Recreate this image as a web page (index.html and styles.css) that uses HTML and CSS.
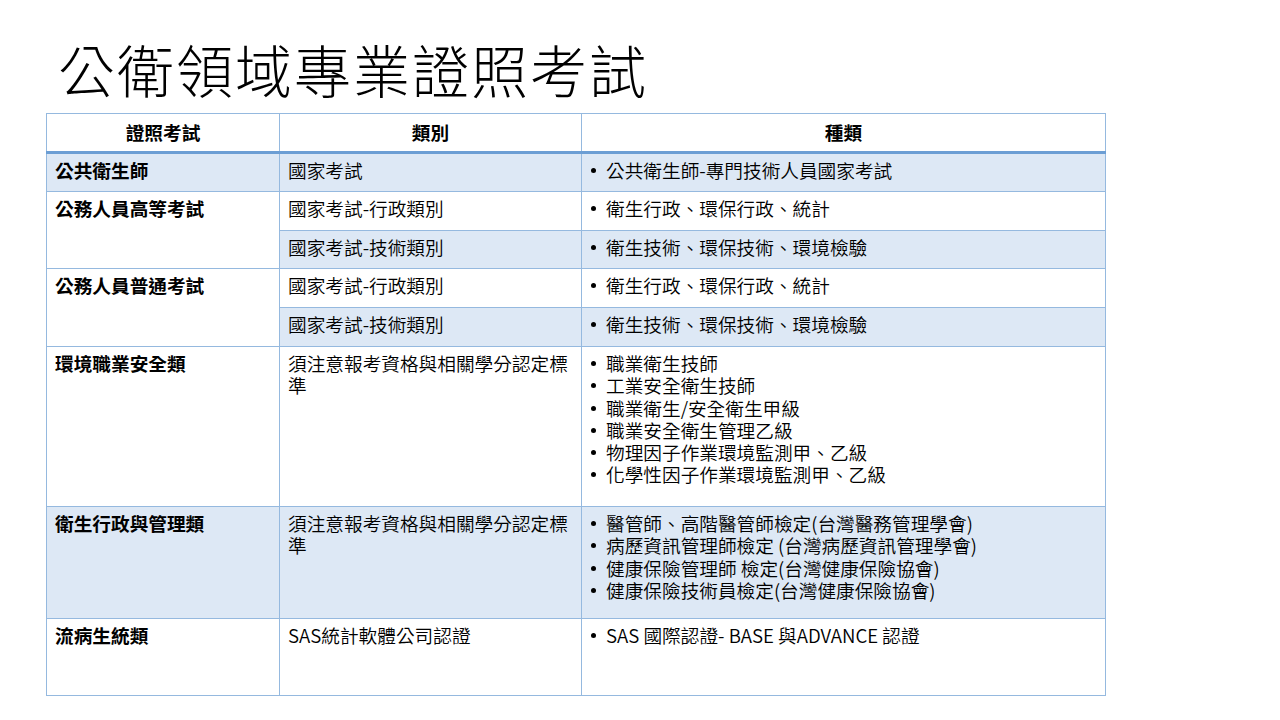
FILE: index.html
```html
<!DOCTYPE html>
<html lang="zh-Hant">
<head>
<meta charset="utf-8">
<title>公衛領域專業證照考試</title>
<link rel="stylesheet" href="styles.css">
</head>
<body>
<div class="slide">
  <h1 class="title">公衛領域專業證照考試</h1>
  <table class="exam-table">
    <colgroup>
      <col class="c1">
      <col class="c2">
      <col class="c3">
    </colgroup>
    <thead>
      <tr class="head">
        <th>證照考試</th>
        <th>類別</th>
        <th>種類</th>
      </tr>
    </thead>
    <tbody>
      <tr class="r-a">
        <td class="name band">公共衛生師</td>
        <td class="band">國家考試</td>
        <td class="band"><ul><li>公共衛生師-專門技術人員國家考試</li></ul></td>
      </tr>
      <tr class="r-a">
        <td class="name" rowspan="2">公務人員高等考試</td>
        <td>國家考試-行政類別</td>
        <td><ul><li>衛生行政、環保行政、統計</li></ul></td>
      </tr>
      <tr class="r-b">
        <td class="band">國家考試-技術類別</td>
        <td class="band"><ul><li>衛生技術、環保技術、環境檢驗</li></ul></td>
      </tr>
      <tr class="r-a">
        <td class="name" rowspan="2">公務人員普通考試</td>
        <td>國家考試-行政類別</td>
        <td><ul><li>衛生行政、環保行政、統計</li></ul></td>
      </tr>
      <tr class="r-a">
        <td class="band">國家考試-技術類別</td>
        <td class="band"><ul><li>衛生技術、環保技術、環境檢驗</li></ul></td>
      </tr>
      <tr class="r-big">
        <td class="name">環境職業安全類</td>
        <td>須注意報考資格與相關學分認定標準</td>
        <td><ul>
          <li>職業衛生技師</li>
          <li>工業安全衛生技師</li>
          <li>職業衛生/安全衛生甲級</li>
          <li>職業安全衛生管理乙級</li>
          <li>物理因子作業環境監測甲、乙級</li>
          <li>化學性因子作業環境監測甲、乙級</li>
        </ul></td>
      </tr>
      <tr class="r-mid">
        <td class="name band">衛生行政與管理類</td>
        <td class="band">須注意報考資格與相關學分認定標準</td>
        <td class="band"><ul>
          <li>醫管師、高階醫管師檢定(台灣醫務管理學會)</li>
          <li>病歷資訊管理師檢定 (台灣病歷資訊管理學會)</li>
          <li>健康保險管理師 檢定(台灣健康保險協會)</li>
          <li>健康保險技術員檢定(台灣健康保險協會)</li>
        </ul></td>
      </tr>
      <tr class="r-last">
        <td class="name">流病生統類</td>
        <td>SAS統計軟體公司認證</td>
        <td><ul><li>SAS 國際認證- BASE 與ADVANCE 認證</li></ul></td>
      </tr>
    </tbody>
  </table>
</div>
</body>
</html>
```

FILE: styles.css
```css
html, body {
  margin: 0;
  padding: 0;
  background: #ffffff;
}

body {
  font-family: "Noto Sans CJK TC", "Noto Sans", sans-serif;
  color: #000000;
}

.slide {
  width: 1280px;
  height: 720px;
  overflow: hidden;
  display: flex;
  flex-direction: column;
  padding-left: 46px;
  box-sizing: border-box;
}

.title {
  margin: 0;
  padding: 40px 0 0 12px;
  height: 73px;
  font-size: 57px;
  line-height: 57px;
  font-weight: 300;
  letter-spacing: 2px;
  white-space: nowrap;
}

.exam-table {
  width: 1059px;
  border-collapse: collapse;
  table-layout: fixed;
  font-size: 18.67px;
  line-height: 22.3px;
}

.c1 { width: 233px; }
.c2 { width: 302px; }
.c3 { width: 524px; }

.exam-table th,
.exam-table td {
  border: 1px solid #95b9df;
  padding: 5px 8px 0 8px;
  vertical-align: top;
  text-align: left;
  font-weight: 350;
}

.exam-table th {
  font-weight: 700;
  text-align: center;
  vertical-align: middle;
  padding: 0 8px;
  border-bottom: 3px solid #6c9ed4;
}

.exam-table td.name {
  font-weight: 700;
}

.exam-table td.band {
  background: #dde8f5;
}

.head { height: 39px; }
.r-a { height: 39px; }
.r-b { height: 38px; }
.r-big { height: 160px; }
.r-mid { height: 112px; }
.r-last { height: 77px; }

.exam-table ul {
  margin: 0;
  padding: 0;
  list-style: none;
}

.exam-table li {
  position: relative;
  padding-left: 16px;
}

.exam-table li::before {
  content: "";
  position: absolute;
  left: 1px;
  top: 9px;
  width: 5px;
  height: 5px;
  border-radius: 50%;
  background: #000000;
}
```
